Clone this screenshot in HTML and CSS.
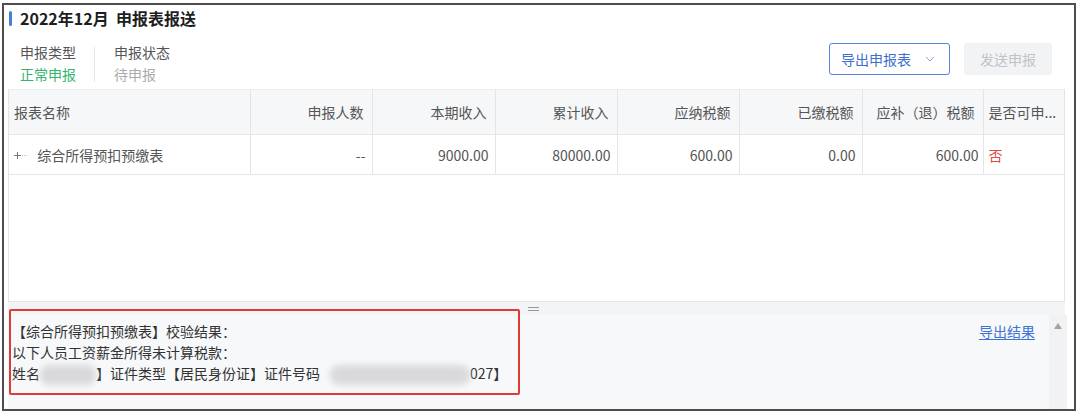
FILE: index.html
```html
<!DOCTYPE html>
<html lang="zh-CN">
<head>
<meta charset="utf-8">
<title>申报表报送</title>
<link rel="stylesheet" href="styles.css">
</head>
<body>
<div class="frame">
  <div class="title-row">
    <span class="title-bar"></span>
    <h1 class="title">2022年12月&nbsp;&nbsp;申报表报送</h1>
  </div>
  <div class="info-row">
    <div class="meta">
      <div class="meta-label">申报类型</div>
      <div class="meta-value green">正常申报</div>
    </div>
    <div class="meta-divider"></div>
    <div class="meta">
      <div class="meta-label">申报状态</div>
      <div class="meta-value muted">待申报</div>
    </div>
    <div class="actions">
      <button class="btn btn-outline">导出申报表
        <svg class="chev" width="10" height="6" viewBox="0 0 10 6"><polyline points="1,1 5,5 9,1" fill="none" stroke="#8aa6d8" stroke-width="1"/></svg>
      </button>
      <button class="btn btn-disabled">发送申报</button>
    </div>
  </div>
  <div class="grid-panel">
    <table class="grid">
      <colgroup>
        <col class="c1"><col class="c2"><col class="c3"><col class="c4"><col class="c5"><col class="c6"><col class="c7"><col class="c8">
      </colgroup>
      <thead>
        <tr>
          <th class="left first">报表名称</th>
          <th>申报人数</th>
          <th>本期收入</th>
          <th>累计收入</th>
          <th>应纳税额</th>
          <th>已缴税额</th>
          <th>应补（退）税额</th>
          <th class="left last">是否可申...</th>
        </tr>
      </thead>
      <tbody>
        <tr>
          <td class="left first">
            <svg class="tree-icon" width="14" height="9" viewBox="0 0 14 9"><path d="M1 4.5h7M4.5 1v7" stroke="#777" stroke-width="1"/><path d="M9 4.5h1M11 4.5h1M13 4.5h1" stroke="#bbb" stroke-width="1"/></svg>
            <span>综合所得预扣预缴表</span>
          </td>
          <td>--</td>
          <td>9000.00</td>
          <td>80000.00</td>
          <td>600.00</td>
          <td>0.00</td>
          <td class="tight">600.00</td>
          <td class="left last red">否</td>
        </tr>
      </tbody>
    </table>
  </div>
  <div class="splitter"><span class="grip"></span></div>
  <div class="result-panel">
    <div class="result-text">
      <p>【综合所得预扣预缴表】校验结果：</p>
      <p>以下人员工资薪金所得未计算税款：</p>
      <p>姓名<span class="blur blur-name"></span>】证件类型【居民身份证】证件号码<span class="blur blur-id"></span>027】</p>
    </div>
    <a class="export-link" href="#">导出结果</a>
    <div class="scrollbar"><span class="arrow-up"></span></div>
  </div>
  <div class="highlight"></div>
</div>
</body>
</html>
```

FILE: styles.css
```css
* { box-sizing: border-box; }
html, body { margin: 0; padding: 0; background: #fff; }
body {
  font-family: "Noto Sans CJK SC", "Noto Sans", sans-serif;
  font-size: 14px;
  color: #444;
}
.frame {
  position: relative;
  width: 1074px;
  height: 408px;
  margin: 3px 0 0 2px;
  border: 2px solid #4d4d4d;
  display: flex;
  flex-direction: column;
  background: #fff;
}
.title-row {
  height: 26px;
  display: flex;
  align-items: center;
  padding-left: 5px;
}
.title-bar {
  width: 3px;
  height: 15px;
  border-radius: 2px;
  background: #4a7ed6;
  margin-right: 8px;
}
.title {
  margin: 0;
  font-size: 16px;
  font-weight: 700;
  color: #1e1e1e;
  line-height: 26px;
}
.info-row {
  display: flex;
  align-items: flex-start;
  margin-top: 10px;
  padding-left: 16px;
  padding-right: 22px;
  height: 48px;
}
.meta { display: flex; flex-direction: column; }
.meta-label, .meta-value { line-height: 22px; height: 22px; font-size: 14px; }
.meta-label { color: #555; }
.green { color: #34b46f; }
.muted { color: #aaa; }
.meta-divider {
  width: 1px;
  height: 35px;
  margin: 6px 19px 0 18px;
  background: #e6e6e6;
}
.actions {
  margin-left: auto;
  margin-top: 2px;
  display: flex;
  gap: 14px;
}
.btn {
  height: 32px;
  font-family: inherit;
  font-size: 14px;
  border-radius: 3px;
  display: flex;
  align-items: center;
  padding: 0;
}
.btn-outline {
  width: 121px;
  border: 1px solid #5584d8;
  background: #fff;
  color: #3d6fd0;
  padding-left: 11px;
}
.chev { margin-left: 14px; }
.btn-disabled {
  width: 88px;
  border: 1px solid #f0f1f3;
  background: #f2f3f5;
  color: #bfc3c9;
  justify-content: center;
}
.grid-panel {
  margin: 0 9px 0 4px;
  height: 213px;
  border: 1px solid #e3e5e8;
  border-top: none;
  background: #fff;
}
.grid {
  width: 100%;
  border-collapse: collapse;
  table-layout: fixed;
}
.c1 { width: 241px; }
.c2 { width: 122px; }
.c3 { width: 123px; }
.c4 { width: 122px; }
.c5 { width: 122px; }
.c6 { width: 123px; }
.c7 { width: 121px; }
.c8 { width: 81px; }
.grid th, .grid td {
  text-align: right;
  font-weight: 400;
  font-size: 14px;
  color: #555;
  border-right: 1px solid #e3e5e8;
  border-bottom: 1px solid #e3e5e8;
  padding: 0 8px 0 4px;
  white-space: nowrap;
  overflow: hidden;
}
.grid th {
  height: 45px;
  background: #f6f7f9;
  border-top: 1px solid #eceef1;
}
.grid td { height: 40px; padding-right: 6px; }
.grid td.tight { padding-right: 4px; }
.grid .left { text-align: left; }
.grid th.first { padding-left: 5px; }
.grid .last { border-right: none; padding-left: 5px; padding-right: 2px; }
.grid td.first { padding-left: 4px; }
.tree-icon { vertical-align: middle; margin-right: 7px; position: relative; top: -1px; }
.red { color: #e2463f !important; }
.splitter {
  height: 13px;
  margin: 0 9px 0 4px;
  background: #f3f4f6;
  display: flex;
  justify-content: center;
  align-items: center;
}
.grip {
  width: 11px;
  height: 4px;
  border-top: 1px solid #999;
  border-bottom: 1px solid #999;
  margin-left: -6px;
}
.result-panel {
  flex: 1;
  margin: 0 7px 0 4px;
  background: #f7f8fa;
  display: flex;
  align-items: flex-start;
  position: relative;
}
.result-text { padding: 6px 0 0 4px; flex: 1; }
.result-text p {
  margin: 0;
  line-height: 21px;
  font-size: 14px;
  color: #333;
  white-space: nowrap;
}
.blur {
  display: inline-block;
  height: 20px;
  vertical-align: middle;
  background: #d9d9dc;
  border-radius: 9px;
  filter: blur(3px);
}
.blur-name { width: 56px; }
.blur-id { width: 140px; margin-left: 10px; }
.export-link {
  margin-top: 6px;
  margin-right: 14px;
  line-height: 20px;
  color: #3f74d6;
  font-size: 14px;
  text-decoration: underline;
  text-underline-offset: 2px;
}
.scrollbar {
  width: 18px;
  align-self: stretch;
  background: #f1f2f4;
  display: flex;
  justify-content: center;
  padding-top: 8px;
}
.arrow-up {
  width: 0;
  height: 0;
  border-left: 4px solid transparent;
  border-right: 4px solid transparent;
  border-bottom: 6px solid #a3a3a3;
}
.highlight {
  position: absolute;
  left: 5px;
  top: 304px;
  width: 511px;
  height: 86px;
  border: 2px solid #df3a3a;
  border-radius: 2px;
  pointer-events: none;
}
```
